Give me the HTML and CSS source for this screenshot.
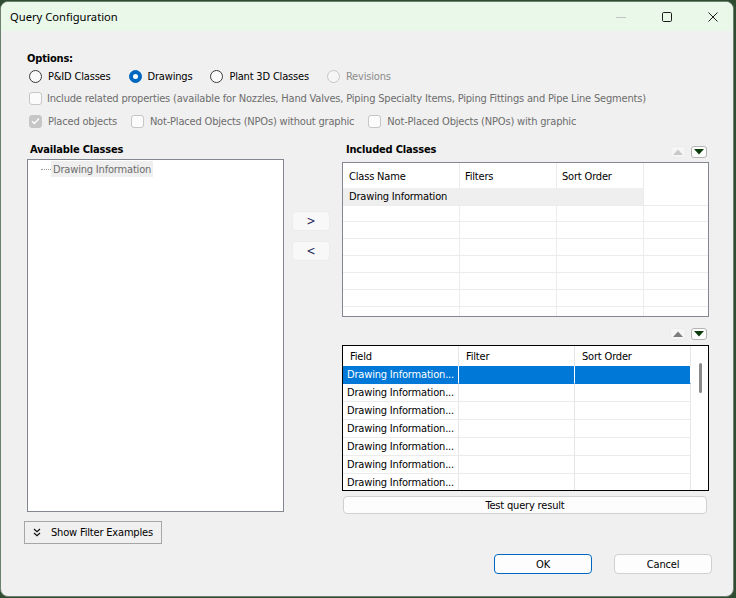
FILE: index.html
```html
<!DOCTYPE html>
<html>
<head>
<meta charset="utf-8">
<link rel="stylesheet" href="styles.css">
</head>
<body>
<div class="window">
  <div class="titlebar">
    <span class="title">Query Configuration</span>
    <div class="caption">
      <svg width="10" height="10" viewBox="0 0 10 10"><path d="M0 5.5h10" stroke="#c4c4c4" stroke-width="1"/></svg>
      <svg width="10" height="10" viewBox="0 0 10 10"><rect x="0.5" y="0.5" width="9" height="9" rx="1.2" fill="none" stroke="#1c1c1c" stroke-width="1"/></svg>
      <svg width="10" height="10" viewBox="0 0 10 10"><path d="M0.5 0.5L9.5 9.5M9.5 0.5L0.5 9.5" stroke="#1c1c1c" stroke-width="1"/></svg>
    </div>
  </div>
  <div class="content">
    <div class="opt-label">Options:</div>
    <div class="radios">
      <label class="ritem"><span class="radio"></span><span>P&amp;ID Classes</span></label>
      <label class="ritem"><span class="radio on"></span><span>Drawings</span></label>
      <label class="ritem"><span class="radio"></span><span>Plant 3D Classes</span></label>
      <label class="ritem dis"><span class="radio off"></span><span>Revisions</span></label>
    </div>
    <div class="checks checks1">
      <label class="citem dis"><span class="cbox"></span><span>Include related properties (available for Nozzles, Hand Valves, Piping Specialty Items, Piping Fittings and Pipe Line Segments)</span></label>
    </div>
    <div class="checks checks2">
      <label class="citem dis"><span class="cbox checked"><svg width="9" height="8" viewBox="0 0 9 8"><path d="M1 4.2L3.4 6.5L8 1.5" fill="none" stroke="#fff" stroke-width="1.3"/></svg></span><span>Placed objects</span></label>
      <label class="citem dis"><span class="cbox"></span><span>Not-Placed Objects (NPOs) without graphic</span></label>
      <label class="citem dis"><span class="cbox"></span><span>Not-Placed Objects (NPOs) with graphic</span></label>
    </div>

    <div class="main">
      <div class="left">
        <div class="section-title avail">Available Classes</div>
        <div class="tree">
          <div class="tree-item"><span class="dots"></span><span class="tree-label">Drawing Information</span></div>
        </div>
      </div>
      <div class="mid">
        <button class="move">&gt;</button>
        <button class="move">&lt;</button>
      </div>
      <div class="right">
        <div class="right-head">
          <span class="section-title">Included Classes</span>
          <div class="arrows">
            <span class="arr up disabled"><svg width="10" height="6" viewBox="0 0 10 6"><path d="M0 6L5 0.5L10 6Z" fill="#c9c9c9"/></svg></span>
            <span class="arr down"><svg width="10" height="6" viewBox="0 0 10 6"><path d="M0 0L10 0L5 5.5Z" fill="#0b3a0b"/></svg></span>
          </div>
        </div>
        <div class="table1">
          <div class="t1-row t1-head">
            <div class="c1">Class Name</div><div class="c2">Filters</div><div class="c3">Sort Order</div><div class="c4"></div>
          </div>
          <div class="t1-row t1-sel">
            <div class="c1">Drawing Information</div><div class="c2"></div><div class="c3"></div><div class="c4"></div>
          </div>
          <div class="t1-row"><div class="c1"></div><div class="c2"></div><div class="c3"></div><div class="c4"></div></div>
          <div class="t1-row"><div class="c1"></div><div class="c2"></div><div class="c3"></div><div class="c4"></div></div>
          <div class="t1-row"><div class="c1"></div><div class="c2"></div><div class="c3"></div><div class="c4"></div></div>
          <div class="t1-row"><div class="c1"></div><div class="c2"></div><div class="c3"></div><div class="c4"></div></div>
          <div class="t1-row"><div class="c1"></div><div class="c2"></div><div class="c3"></div><div class="c4"></div></div>
          <div class="t1-row"><div class="c1"></div><div class="c2"></div><div class="c3"></div><div class="c4"></div></div>
          <div class="t1-row t1-last"><div class="c1"></div><div class="c2"></div><div class="c3"></div><div class="c4"></div></div>
        </div>
        <div class="arrows arrows2">
          <span class="arr up"><svg width="10" height="6" viewBox="0 0 10 6"><path d="M0 6L5 0.5L10 6Z" fill="#7d7d7d"/></svg></span>
          <span class="arr down"><svg width="10" height="6" viewBox="0 0 10 6"><path d="M0 0L10 0L5 5.5Z" fill="#0b3a0b"/></svg></span>
        </div>
        <div class="grid2">
          <div class="g2-table">
            <div class="g2-row g2-head"><div>Field</div><div>Filter</div><div>Sort Order</div></div>
            <div class="g2-row g2-sel"><div>Drawing Information...</div><div></div><div></div></div>
            <div class="g2-row"><div>Drawing Information...</div><div></div><div></div></div>
            <div class="g2-row"><div>Drawing Information...</div><div></div><div></div></div>
            <div class="g2-row"><div>Drawing Information...</div><div></div><div></div></div>
            <div class="g2-row"><div>Drawing Information...</div><div></div><div></div></div>
            <div class="g2-row"><div>Drawing Information...</div><div></div><div></div></div>
            <div class="g2-row"><div>Drawing Information...</div><div></div><div></div></div>
          </div>
          <div class="g2-scroll"><span class="thumb"></span></div>
        </div>
        <button class="test">Test query result</button>
      </div>
    </div>

    <div class="filter-row">
      <button class="filter-btn"><svg width="8" height="10" viewBox="0 0 8 10"><path d="M1 1L4 3.8L7 1M1 5L4 7.8L7 5" fill="none" stroke="#111" stroke-width="1.2"/></svg><span>Show Filter Examples</span></button>
    </div>
    <div class="footer">
      <button class="dlg ok">OK</button>
      <button class="dlg">Cancel</button>
    </div>
  </div>
</div>
</body>
</html>
```
FILE: styles.css
```css
* { box-sizing: border-box; }
html, body { margin: 0; padding: 0; }
body {
  width: 736px;
  height: 598px;
  overflow: hidden;
  background: #2f4c31;
  font-family: "DejaVu Sans Condensed", "DejaVu Sans", sans-serif;
  font-size: 11px;
  letter-spacing: -0.18px;
  color: #000;
}
button { font-family: inherit; font-size: 11px; letter-spacing: -0.18px; color: #000; padding: 0; margin: 0; cursor: default; }

.window {
  margin-top: 1px;
  width: 734px;
  height: 596px;
  border: 1px solid #6d7f6f;
  border-radius: 8px;
  background: #f0f0f0;
  overflow: hidden;
  display: flex;
  flex-direction: column;
}

.titlebar {
  height: 29px;
  flex: none;
  background: #eaf8ea;
  display: flex;
  align-items: center;
  padding-left: 9px;
  padding-right: 15px;
}
.title {
  font-family: "Noto Sans", "Open Sans", sans-serif;
  font-size: 11.2px;
  letter-spacing: 0;
  color: #000;
}
.caption { margin-left: auto; display: flex; gap: 36px; align-items: center; }
.caption svg { display: block; }

.content {
  flex: 1;
  padding: 21px 0 0 26px;
  display: flex;
  flex-direction: column;
}

.opt-label { font-weight: bold; line-height: 14px; height: 14px; }

.radios { display: flex; gap: 18px; height: 16px; margin-top: 2px; align-items: center; padding-left: 2px; }
.ritem { display: flex; align-items: center; gap: 6px; }
.radio {
  width: 13px; height: 13px; border-radius: 50%;
  border: 1px solid #3a3a3a; background: #fbfbfb;
  display: inline-flex; align-items: center; justify-content: center;
}
.radio.on { background: #0067c0; border-color: #0067c0; }
.radio.on::after { content: ""; width: 5px; height: 5px; border-radius: 50%; background: #fff; }
.radio.off { border-color: #c6c6c6; background: #f6f6f6; }
.dis { color: #6d6d6d; }
.ritem.dis { color: #8c8c8c; }

.checks { display: flex; align-items: center; height: 16px; padding-left: 2px; gap: 14px; }
.checks1 { margin-top: 6px; }
.checks2 { margin-top: 7px; }
.citem { display: flex; align-items: center; gap: 5px; }
.checks2 .citem { gap: 6px; }
.cbox {
  width: 13px; height: 13px; border-radius: 3px;
  border: 1px solid #c6c6c6; background: #fbfbfb;
  display: inline-flex; align-items: center; justify-content: center;
}
.cbox.checked { background: #c6c6c6; }
.cbox svg { display: block; }

.main {
  display: grid;
  grid-template-columns: 257px 58px 367px;
  margin-top: 13px;
}
.section-title { font-weight: bold; line-height: 14px; height: 14px; padding-top: 1px; }
.avail { padding-left: 3px; }

.tree {
  margin-top: 3px;
  height: 353px;
  border: 1px solid #838790;
  background: #fff;
  padding-top: 1px;
}
.tree-item { display: flex; align-items: center; padding-left: 13px; height: 16px; }
.dots { width: 10px; height: 0; border-top: 1px dotted #9a9a9a; margin-top: 1px; }
.tree-label { background: #efefef; color: #6d6d6d; padding: 1px 2px 0 2px; line-height: 15px; }

.mid { padding-top: 69px; padding-left: 8px; display: flex; flex-direction: column; gap: 10px; }
.move {
  width: 38px; height: 20px;
  background: #f8f8f8;
  border: 1px solid #ececec;
  border-radius: 4px;
  color: #1d2a5c;
  font-size: 12px;
}

.right { display: flex; flex-direction: column; }
.right-head { height: 20px; display: flex; justify-content: space-between; align-items: flex-start; }
.right-head .section-title { padding-left: 4px; }
.arrows { display: flex; gap: 5px; padding-right: 2px; margin-top: 4px; }
.arr {
  width: 16px; height: 12px;
  display: inline-flex; align-items: center; justify-content: center;
  border-radius: 3px;
}
.arr svg { display: block; }
.arr.up { background: #f5f5f5; border: 1px solid #ececec; }
.arr.down { background: #fdfdfd; border: 1px solid #b4b4b4; }
.arrows2 { align-self: flex-end; margin-top: 11px; }

.table1 {
  height: 155px;
  border: 1px solid #838790;
  background: #fff;
  overflow: hidden;
}
.t1-row { display: grid; grid-template-columns: 117px 97px 87px 1fr; height: 17px; }
.t1-row > div { border-right: 1px solid #ececec; border-bottom: 1px solid #ececec; line-height: 16px; padding-left: 6px; padding-top: 1px; white-space: nowrap; }
.t1-row > .c2, .t1-row > .c3 { padding-left: 5px; }
.t1-row > .c4 { border-right: none; }
.t1-head { height: 25px; }
.t1-head > div { border-bottom: none; line-height: 25px; padding-top: 1px; }
.t1-sel > .c1, .t1-sel > .c2, .t1-sel > .c3 { background: #efefef; border-right-color: #efefef; }
.t1-sel > .c3 { border-right-color: #ececec; }
.t1-last { height: 11px; }
.t1-last > div { border-bottom: none; }

.grid2 {
  margin-top: 5px;
  height: 146px;
  border: 1px solid #000;
  background: #fff;
  display: flex;
  overflow: hidden;
}
.g2-table { width: 348px; }
.g2-row { display: grid; grid-template-columns: 116px 116px 116px; height: 18px; }
.g2-row > div { border-right: 1px solid #e6e6e6; border-bottom: 1px solid #ebebeb; line-height: 16px; padding-top: 1px; padding-left: 4px; white-space: nowrap; overflow: hidden; }
.g2-head { height: 20px; }
.g2-head > div { border-bottom: none; line-height: 19px; padding-top: 1px; padding-left: 7px; }
.g2-sel > div { background: #0078d7; color: #fff; border-right-color: #fff; border-bottom-color: #0078d7; }
.g2-scroll { flex: 1; padding-left: 8px; padding-top: 17px; }
.thumb { display: block; width: 3px; height: 30px; border-radius: 2px; background: #8a8a8a; }

.test {
  margin-top: 5px;
  margin-left: 1px;
  width: 364px;
  height: 18px;
  background: #fdfdfd;
  border: 1px solid #d0d0d0;
  border-radius: 4px;
}

.filter-row { margin-top: 7px; margin-left: -3px; }
.filter-btn {
  width: 138px; height: 23px;
  border: 1px solid #a6a6a6;
  background: #f0f0f0;
  display: flex; align-items: center;
  padding-left: 8px; gap: 10px;
}
.filter-btn svg { display: block; }

.footer { margin-top: 10px; display: flex; justify-content: flex-end; gap: 22px; padding-right: 21px; }
.dlg {
  width: 98px; height: 20px;
  background: #fdfdfd;
  border: 1px solid #d0d0d0;
  border-radius: 4px;
}
.dlg.ok { border-color: #0067c0; }
```
